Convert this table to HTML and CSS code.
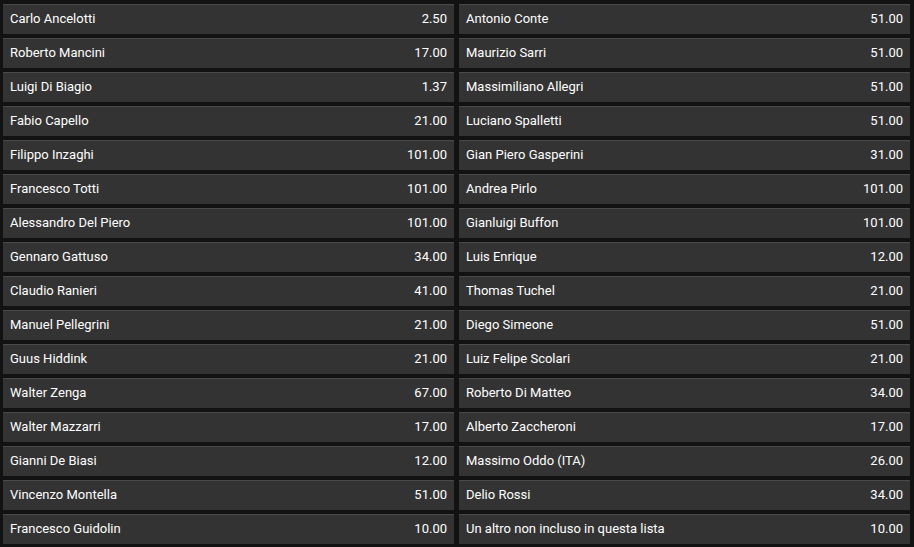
FILE: index.html
```html
<!DOCTYPE html>
<html lang="it">
<head>
    <meta charset="UTF-8">
    <meta name="viewport" content="width=device-width, initial-scale=1.0">
    <title>Quote allenatore</title>
    <link rel="stylesheet" href="styles.css">
</head>
<body>
    <div class="odds-grid">
        <div class="odd"><span class="name">Carlo Ancelotti</span><span class="price">2.50</span></div>
        <div class="odd"><span class="name">Antonio Conte</span><span class="price">51.00</span></div>
        <div class="odd"><span class="name">Roberto Mancini</span><span class="price">17.00</span></div>
        <div class="odd"><span class="name">Maurizio Sarri</span><span class="price">51.00</span></div>
        <div class="odd"><span class="name">Luigi Di Biagio</span><span class="price">1.37</span></div>
        <div class="odd"><span class="name">Massimiliano Allegri</span><span class="price">51.00</span></div>
        <div class="odd"><span class="name">Fabio Capello</span><span class="price">21.00</span></div>
        <div class="odd"><span class="name">Luciano Spalletti</span><span class="price">51.00</span></div>
        <div class="odd"><span class="name">Filippo Inzaghi</span><span class="price">101.00</span></div>
        <div class="odd"><span class="name">Gian Piero Gasperini</span><span class="price">31.00</span></div>
        <div class="odd"><span class="name">Francesco Totti</span><span class="price">101.00</span></div>
        <div class="odd"><span class="name">Andrea Pirlo</span><span class="price">101.00</span></div>
        <div class="odd"><span class="name">Alessandro Del Piero</span><span class="price">101.00</span></div>
        <div class="odd"><span class="name">Gianluigi Buffon</span><span class="price">101.00</span></div>
        <div class="odd"><span class="name">Gennaro Gattuso</span><span class="price">34.00</span></div>
        <div class="odd"><span class="name">Luis Enrique</span><span class="price">12.00</span></div>
        <div class="odd"><span class="name">Claudio Ranieri</span><span class="price">41.00</span></div>
        <div class="odd"><span class="name">Thomas Tuchel</span><span class="price">21.00</span></div>
        <div class="odd"><span class="name">Manuel Pellegrini</span><span class="price">21.00</span></div>
        <div class="odd"><span class="name">Diego Simeone</span><span class="price">51.00</span></div>
        <div class="odd"><span class="name">Guus Hiddink</span><span class="price">21.00</span></div>
        <div class="odd"><span class="name">Luiz Felipe Scolari</span><span class="price">21.00</span></div>
        <div class="odd"><span class="name">Walter Zenga</span><span class="price">67.00</span></div>
        <div class="odd"><span class="name">Roberto Di Matteo</span><span class="price">34.00</span></div>
        <div class="odd"><span class="name">Walter Mazzarri</span><span class="price">17.00</span></div>
        <div class="odd"><span class="name">Alberto Zaccheroni</span><span class="price">17.00</span></div>
        <div class="odd"><span class="name">Gianni De Biasi</span><span class="price">12.00</span></div>
        <div class="odd"><span class="name">Massimo Oddo (ITA)</span><span class="price">26.00</span></div>
        <div class="odd"><span class="name">Vincenzo Montella</span><span class="price">51.00</span></div>
        <div class="odd"><span class="name">Delio Rossi</span><span class="price">34.00</span></div>
        <div class="odd"><span class="name">Francesco Guidolin</span><span class="price">10.00</span></div>
        <div class="odd"><span class="name">Un altro non incluso in questa lista</span><span class="price">10.00</span></div>
    </div>
</body>
</html>
```

FILE: styles.css
```css
body {
    margin: 0;
    background-color: #121212;
    font-family: Roboto, "Liberation Sans", sans-serif;
    font-size: 13px;
    color: #ffffff;
}

.odds-grid {
    display: grid;
    grid-template-columns: 451px 451px;
    column-gap: 5px;
    row-gap: 4px;
    padding: 4px 0 0 3px;
}

.odd {
    display: flex;
    justify-content: space-between;
    align-items: center;
    box-sizing: border-box;
    height: 30px;
    padding: 0 7px 2px 7px;
    background-color: #333333;
    border-top: 1px solid #4a4a4a;
}
```
